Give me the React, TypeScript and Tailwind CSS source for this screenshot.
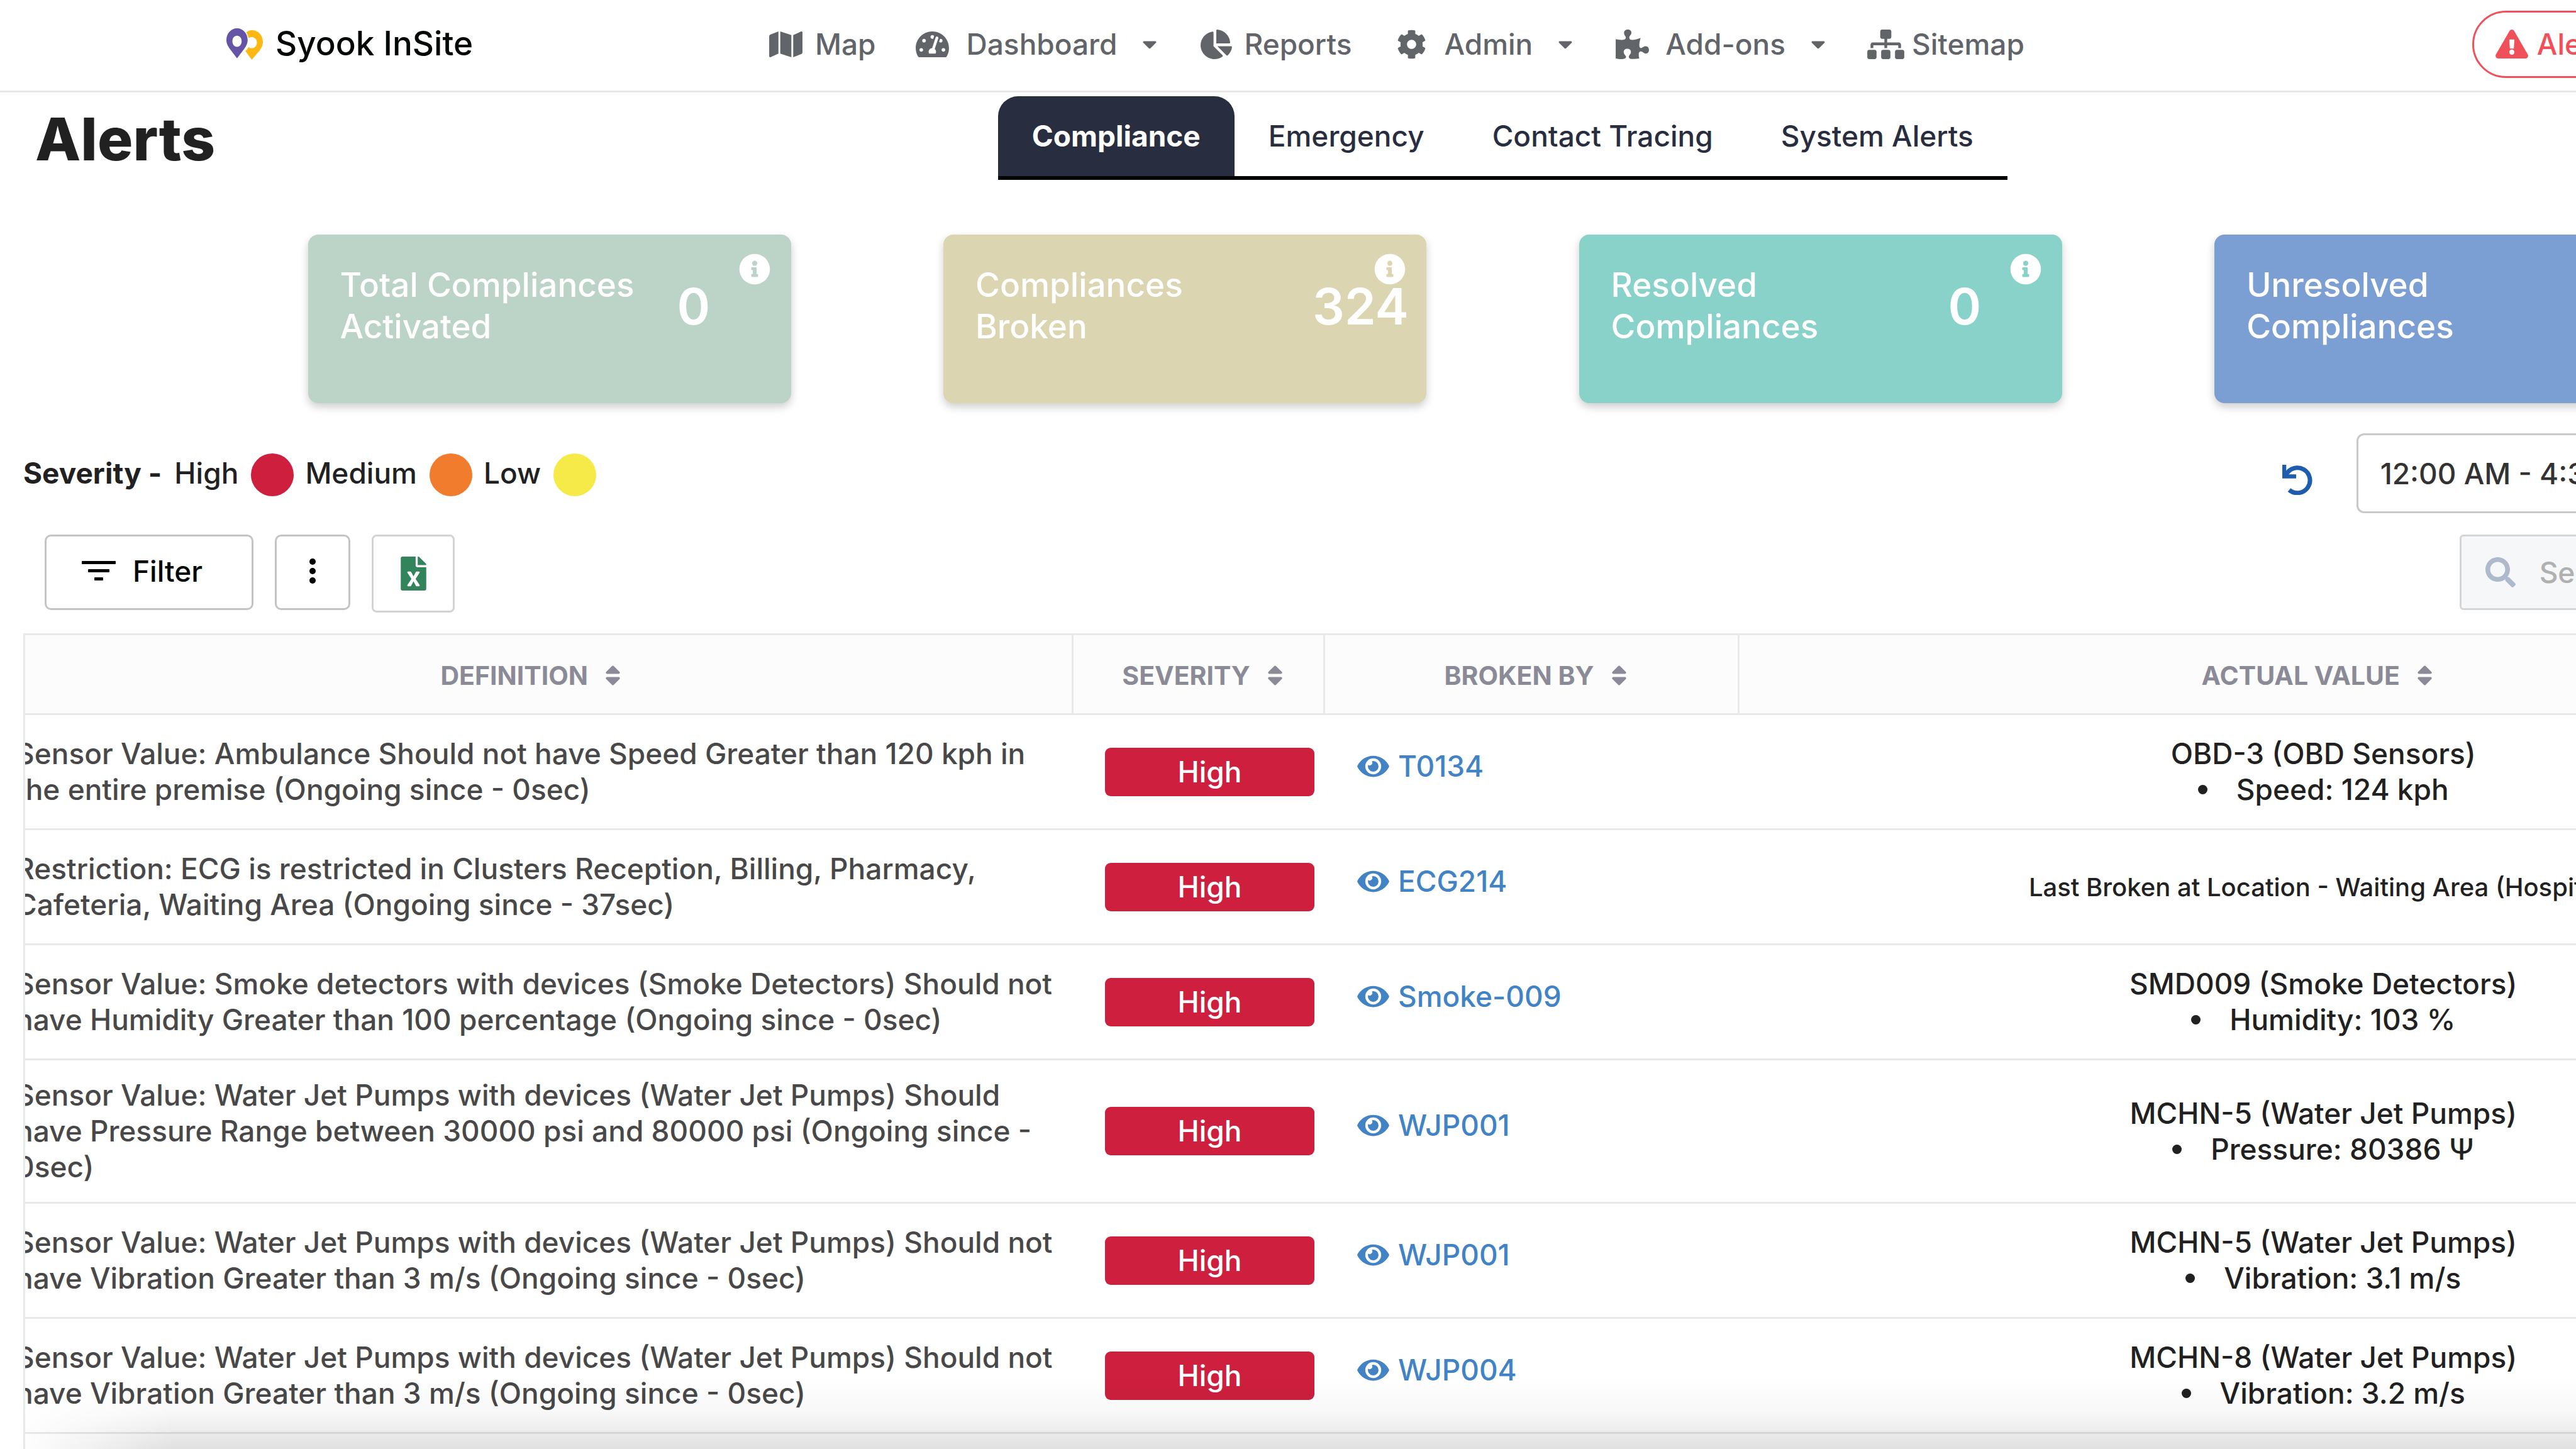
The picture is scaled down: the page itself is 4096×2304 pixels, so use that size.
import {
  FaMap,
  FaTachometerAlt,
  FaChartPie,
  FaCog,
  FaPuzzlePiece,
  FaSitemap,
  FaExclamationTriangle,
  FaInfoCircle,
  FaFileExcel,
  FaSort,
  FaEye,
  FaSearch,
  FaCaretDown,
} from "react-icons/fa";

const navLink = "flex items-center text-[46px] leading-[56px] font-medium text-[#616469]";

function Logo() {
  return (
    <svg className="h-[50px] w-[60px]" viewBox="0 0 79 68" aria-hidden="true">
      <path
        fill="#fdb813"
        d="M55 4c14 0 24 11 24 26 0 7-3 12-7 18L55 68 41 49c4-3 6-6 7-9 2 2 4 3 7 3 6 0 11-5 11-12s-5-12-11-12c-3 0-5 1-7 2-1-5-3-9-5-12 3-3 7-5 12-5z"
      />
      <path
        fill="#6554a5"
        fillRule="evenodd"
        d="M23 0c13 0 23 11 23 26 0 7-3 12-7 18L23 65 7 44C3 38 0 33 0 26 0 11 10 0 23 0zm0 16c-6 0-10 5-10 12s4 12 10 12 10-5 10-12-4-12-10-12z"
      />
    </svg>
  );
}

function Caret() {
  return <FaCaretDown className="ml-[34px] size-[36px]" />;
}

function Header() {
  return (
    <header className="flex h-[147px] items-center border-b-[3px] border-[#e7e7e7] pb-[4px]">
      <a href="#home" className="ml-[359px] flex w-[864px] items-center gap-[19px] text-[53px] font-medium text-[#030706]">
        <Logo />
        Syook InSite
      </a>
      <nav className="flex shrink-0 items-center" aria-label="Main">
        <a href="#map" className={navLink + " gap-[20px]"}>
          <FaMap className="h-[47px] w-[53px]" />
          Map
        </a>
        <button type="button" className={navLink + " ml-[63px]"}>
          <FaTachometerAlt className="mr-[28px] h-[47px] w-[53px]" />
          Dashboard
          <Caret />
        </button>
        <a href="#reports" className={navLink + " ml-[62px] gap-[18px]"}>
          <FaChartPie className="h-[47px] w-[52px]" />
          Reports
        </a>
        <button type="button" className={navLink + " ml-[72px]"}>
          <FaCog className="mr-[28px] size-[47px]" />
          Admin
          <Caret />
        </button>
        <button type="button" className={navLink + " ml-[62px]"}>
          <FaPuzzlePiece className="mr-[26px] h-[47px] w-[53px]" />
          Add-ons
          <Caret />
        </button>
        <a href="#sitemap" className={navLink + " ml-[60px] gap-[12px]"}>
          <FaSitemap className="h-[47px] w-[59px]" />
          Sitemap
        </a>
      </nav>
      <button
        type="button"
        className="ml-auto mr-[578px] flex h-[107px] shrink-0 items-center gap-[14px] rounded-full border-[3px] border-[#f0505a] px-[34px] text-[46px] font-medium text-[#f0505a]"
      >
        <FaExclamationTriangle className="h-[46px] w-[52px]" />
        Alerts
      </button>
    </header>
  );
}

const tabs = ["Compliance", "Emergency", "Contact Tracing", "System Alerts"];

function TitleBar() {
  return (
    <div className="grid grid-cols-[1fr_auto_1fr] items-start pt-[6px]">
      <h1 className="pl-[56px] pt-[10px] text-[94px] leading-[116px] font-extrabold text-[#212121]">Alerts</h1>
      <div role="tablist" className="flex border-b-[6px] border-[#000503]">
        {tabs.map((tab, i) => (
          <button
            key={tab}
            type="button"
            role="tab"
            aria-selected={i === 0}
            className={
              i === 0
                ? "h-[127px] rounded-t-[32px] bg-[#292d40] px-[54px] text-[46px] font-bold text-white"
                : "h-[127px] px-[54px] text-[46px] font-medium text-[#292d40]"
            }
          >
            {tab}
          </button>
        ))}
      </div>
      <span />
    </div>
  );
}

const cards = [
  { label: "Total Compliances Activated", value: "0", tone: "bg-[#bcd4c7]" },
  { label: "Compliances Broken", value: "324", tone: "bg-[#dbd5b1]" },
  { label: "Resolved Compliances", value: "0", tone: "bg-[#89d2ca]" },
  { label: "Unresolved Compliances", value: "324", tone: "bg-[#7b9fd2]" },
];

function Cards() {
  return (
    <section className="mx-[247px] mt-[87px] flex justify-evenly" aria-label="Summary">
      {cards.map((c) => (
        <article
          key={c.label}
          className={
            "relative flex h-[268px] w-[768px] items-start rounded-[16px] pl-[51px] pt-[47px] text-white shadow-[0_6px_14px_rgba(0,0,0,0.2)] " +
            c.tone
          }
        >
          <h2 className="mr-[56px] w-[480px] text-[53px] leading-[66px] font-medium">{c.label}</h2>
          <p className="pt-[19px] text-[80px] leading-[96px] font-semibold">{c.value}</p>
          <FaInfoCircle className="absolute right-[33px] top-[30px] size-[50px]" />
        </article>
      ))}
    </section>
  );
}

function UndoIcon() {
  return (
    <svg className="size-[48px]" viewBox="0 0 48 48" fill="none" stroke="#1e5dae" aria-hidden="true">
      <path d="M6 16A20 20 0 1 1 11 40" strokeWidth="7" />
      <path d="M3 0V18.500H22" strokeWidth="6.500" />
    </svg>
  );
}

const legend = [
  { name: "High", tone: "bg-[#ce1f3e]" },
  { name: "Medium", tone: "bg-[#f27c2d]" },
  { name: "Low", tone: "bg-[#f6ea49]" },
];

function Toolbar() {
  return (
    <>
      <div className="mt-[48px] flex h-[127px] items-center justify-between pl-[37px]">
        <div className="flex items-center text-[46px] font-medium text-[#212121]">
          <span className="mr-[20px] font-bold">Severity -</span>
          {legend.map((l) => (
            <span key={l.name} className="mr-[18px] flex items-center gap-[20px]">
              {l.name}
              <span className={"mt-[4px] size-[68px] rounded-full " + l.tone} />
            </span>
          ))}
        </div>
        <div className="flex items-center">
          <button type="button" aria-label="Refresh" className="mr-[70px] pt-[20px]">
            <UndoIcon />
          </button>
          <input
            aria-label="Time range"
            readOnly
            defaultValue="12:00 AM - 4:30 PM"
            className="h-[127px] w-[1032px] rounded-[12px] border-[3px] border-[#c9c9c9] pl-[35px] text-[46px] font-medium text-[#333333]"
          />
        </div>
      </div>
      <div className="mt-[34px] flex items-start justify-between pl-[71px]">
        <div className="flex items-start gap-[34px]">
          <button
            type="button"
            className="flex h-[120px] w-[332px] items-center rounded-[10px] border-[3px] border-[#c4c4c4] pb-[4px] pl-[56px] text-[46px] font-medium text-[#030706]"
          >
            <svg className="mr-[27px] h-[32px] w-[54px]" viewBox="0 0 54 32" aria-hidden="true">
              <rect width="54" height="5" rx="1" />
              <rect x="10" y="13" width="34" height="5" rx="1" />
              <rect x="20" y="26" width="14" height="5" rx="1" />
            </svg>
            Filter
          </button>
          <button
            type="button"
            aria-label="More"
            className="flex h-[120px] w-[120px] items-center justify-center rounded-[10px] border-[3px] border-[#c4c4c4] pb-[4px]"
          >
            <svg className="h-[42px] w-[10px]" viewBox="0 0 10 42" aria-hidden="true">
              <circle cx="5" cy="6" r="5" />
              <circle cx="5" cy="21" r="5" />
              <circle cx="5" cy="36" r="5" />
            </svg>
          </button>
          <button
            type="button"
            aria-label="Export to Excel"
            className="flex h-[124px] w-[132px] items-center justify-center rounded-[8px] border-[3px] border-[#d3d3d3]"
          >
            <FaFileExcel className="h-[54px] w-[41px] text-[#32845a]" />
          </button>
        </div>
        <label className="flex h-[120px] w-[868px] items-center rounded-[6px] border-[3px] border-[#d3d5d7] bg-[#f6f7f9] pl-[38px]">
          <FaSearch className="mr-[38px] size-[48px] shrink-0 text-[#aeb9cc]" />
          <input
            type="search"
            aria-label="Search"
            placeholder="Search"
            className="w-full text-[46px] font-medium outline-none placeholder:text-[#b0b0b0]"
          />
        </label>
      </div>
    </>
  );
}

const rows = [
  {
    text: "Sensor Value: Ambulance Should not have Speed Greater than 120 kph in the entire premise (Ongoing since - 0sec)",
    by: "T0134",
    device: "OBD-3 (OBD Sensors)",
    reading: "Speed: 124 kph",
  },
  {
    text: "Restriction: ECG is restricted in Clusters Reception, Billing, Pharmacy, Cafeteria, Waiting Area (Ongoing since - 37sec)",
    by: "ECG214",
    place: "Last Broken at Location - Waiting Area (Hospital)",
  },
  {
    text: "Sensor Value: Smoke detectors with devices (Smoke Detectors) Should not have Humidity Greater than 100 percentage (Ongoing since - 0sec)",
    by: "Smoke-009",
    device: "SMD009 (Smoke Detectors)",
    reading: "Humidity: 103 %",
  },
  {
    text: "Sensor Value: Water Jet Pumps with devices (Water Jet Pumps) Should have Pressure Range between 30000 psi and 80000 psi (Ongoing since - 0sec)",
    by: "WJP001",
    device: "MCHN-5 (Water Jet Pumps)",
    reading: "Pressure: 80386 Ψ",
  },
  {
    text: "Sensor Value: Water Jet Pumps with devices (Water Jet Pumps) Should not have Vibration Greater than 3 m/s (Ongoing since - 0sec)",
    by: "WJP001",
    device: "MCHN-5 (Water Jet Pumps)",
    reading: "Vibration: 3.1 m/s",
  },
  {
    text: "Sensor Value: Water Jet Pumps with devices (Water Jet Pumps) Should not have Vibration Greater than 3 m/s (Ongoing since - 0sec)",
    by: "WJP004",
    device: "MCHN-8 (Water Jet Pumps)",
    reading: "Vibration: 3.2 m/s",
  },
];

const columns = ["Definition", "Severity", "Broken by", "Actual value"];

function AlertsTable() {
  return (
    <div className="ml-[37px] mt-[33px] overflow-hidden border-l-[3px] border-[#e8e9ea]">
      <table className="-ml-[70px] w-[4622px] table-fixed border-collapse text-[46px] leading-[57px] font-medium">
        <colgroup>
          <col className="w-[1735px]" />
          <col className="w-[400px]" />
          <col className="w-[659px]" />
          <col />
        </colgroup>
        <thead>
          <tr className="h-[127px] border-y-[3px] border-[#e8e9ea] bg-[#fcfcfc] text-[41px] text-[#8b8b98]">
            {columns.map((c) => (
              <th key={c} scope="col" className="border-r-[3px] border-[#e8e9ea] pl-[14px] pt-[4px] font-bold uppercase">
                <button type="button" className="inline-flex items-center gap-[27px] uppercase">
                  {c}
                  <FaSort className="h-[40px] w-[25px]" />
                </button>
              </th>
            ))}
          </tr>
        </thead>
        <tbody>
          {rows.map((r, i) => (
            <tr key={i} className="h-[183px] border-b-[3px] border-[#e8e9ea]">
              <td className="py-[27px] pl-[55px] pr-[20px] text-[#484848]">{r.text}</td>
              <td className="pl-[52px] pr-[15px]">
                <div className="rounded-[9px] bg-[#ce1f3e] text-center leading-[77px] text-white">High</div>
              </td>
              <td className="pb-[12px] pl-[53px]">
                <a href={"#" + r.by} className="inline-flex items-center gap-[14px] text-[#4183c4]">
                  <FaEye className="h-[45px] w-[51px]" />
                  {r.by}
                </a>
              </td>
              <td className="pl-[34px] text-center text-[#212121]">
                {r.place ? (
                  <p className="pr-[8px] text-[40px] whitespace-nowrap">{r.place}</p>
                ) : (
                  <>
                    <p>{r.device}</p>
                    <ul>
                      <li className="flex items-center justify-center gap-[46px]">
                        <span className="size-[15px] rounded-full bg-[#212121]" />
                        {r.reading}
                      </li>
                    </ul>
                  </>
                )}
              </td>
            </tr>
          ))}
          <tr className="h-[183px]">
            <td colSpan={4} />
          </tr>
        </tbody>
      </table>
    </div>
  );
}

export default function App() {
  return (
    <div className="relative h-screen overflow-hidden bg-white font-['Inter',sans-serif]">
      <div className="w-7/6">
        <Header />
        <main>
          <TitleBar />
          <Cards />
          <Toolbar />
          <AlertsTable />
        </main>
      </div>
      <div className="pointer-events-none absolute inset-x-0 bottom-0 h-[115px] bg-linear-to-t from-black/12 via-black/3 to-transparent mask-l-from-[3820px] mask-l-to-[4070px]" />
    </div>
  );
}
